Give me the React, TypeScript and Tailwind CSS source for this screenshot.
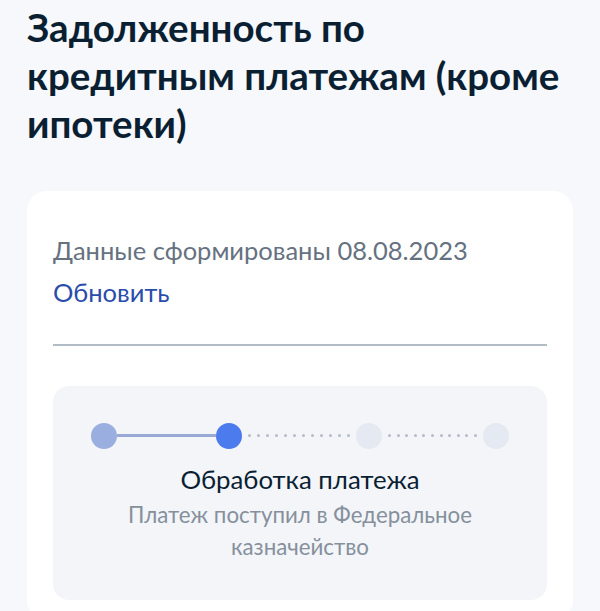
import React from 'react';

const steps = [
  { state: 'done' },
  { state: 'current' },
  { state: 'todo' },
  { state: 'todo' },
];

function Dot({ state }: { state: string }) {
  const color =
    state === 'done' ? 'bg-[#9aaee0]' : state === 'current' ? 'bg-[#4b7bec]' : 'bg-[#e5e9f1]';
  return <div className={`w-[26px] h-[26px] rounded-full shrink-0 ${color}`} />;
}

function Connector({ solid, width, dots }: { solid: boolean; width: string; dots: number }) {
  if (solid) {
    return <div className={`${width} h-[3px] bg-[#9aaad6]`} />;
  }
  return (
    <div className={`${width} flex items-center justify-between px-[6px]`}>
      {Array.from({ length: dots }).map((_, i) => (
        <span key={i} className="w-[3px] h-[3px] rounded-full bg-[#b4bcc8]" />
      ))}
    </div>
  );
}

const connectors = [
  { solid: true, width: 'w-[99px]', dots: 0 },
  { solid: false, width: 'w-[114px]', dots: 12 },
  { solid: false, width: 'w-[101px]', dots: 11 },
];

export default function App() {
  return (
    <div className="min-h-[611px] bg-[#f6f8fb] px-[27px] pt-[3px] overflow-hidden" style={{ fontFamily: 'Lato, "Noto Sans", sans-serif' }}>
      <h1 className="text-[38.5px] leading-[48px] font-bold text-[#0b1f33]">
        Задолженность по кредитным платежам (кроме ипотеки)
      </h1>

      <div className="mt-[44px] bg-white rounded-[20px] px-[26px] pt-[42px] pb-[20px]">
        <p className="text-[25.5px] leading-[34px] text-[#66727f]">Данные сформированы 08.08.2023</p>
        <button className="block mt-[8px] text-[25.5px] leading-[34px] text-[#2a4dab]">Обновить</button>

        <div className="mt-[35px] h-[1.5px] bg-[#b2bcc5]" />

        <div className="mt-[40px] bg-[#f3f5f9] rounded-[16px] px-[38px] pt-[37px] pb-[37px]">
          <div className="flex items-center">
            {steps.map((s, i) => (
              <React.Fragment key={i}>
                <Dot state={s.state} />
                {i < connectors.length && <Connector {...connectors[i]} />}
              </React.Fragment>
            ))}
          </div>
          <div className="mt-[14px] text-center">
            <p className="text-[25.8px] leading-[32px] text-[#0b1f33]">Обработка платежа</p>
            <p className="mt-[4px] text-[22.3px] leading-[32px] text-[#86909c]">
              Платеж поступил в Федеральное казначейство
            </p>
          </div>
        </div>
      </div>
    </div>
  );
}
